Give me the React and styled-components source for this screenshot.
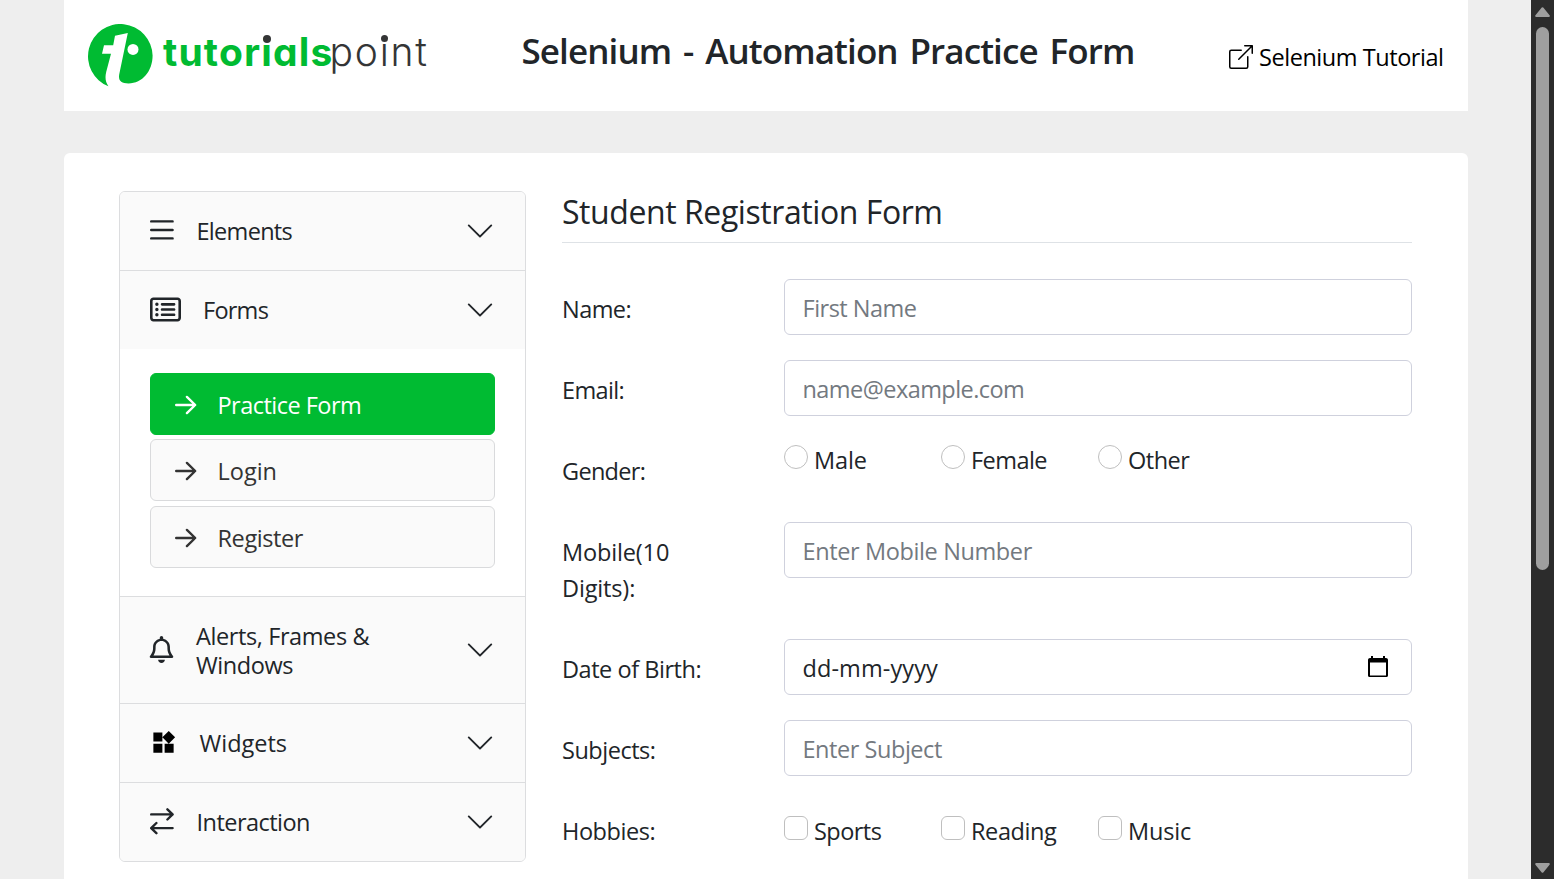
import React from "react";
import styled, { createGlobalStyle } from "styled-components";
import { FaRegBell, FaRegRectangleList } from "react-icons/fa6";
import { BsBoxArrowUpRight, BsChevronDown } from "react-icons/bs";
import { MdWidgets } from "react-icons/md";

const GlobalStyle = createGlobalStyle`
  *, *::before, *::after { box-sizing: border-box; }
  body {
    margin: 0;
    height: 879px;
    overflow: hidden;
    color: #212529;
    background: #eee;
    font-family: "Open Sans", "Noto Sans", sans-serif;
    font-size: 23.5px;
    line-height: 36px;
    letter-spacing: -0.4px;
  }
`;

const Screen = styled.div`
  display: flex;
  height: 879px;
  overflow: hidden;
`;

const Page = styled.div`
  flex: 1;
  min-width: 0;
  padding: 0 63px 0 64px;
  display: flex;
  flex-direction: column;
  gap: 42px;
`;

const Header = styled.header`
  flex: none;
  height: 111px;
  padding: 0 24px;
  display: flex;
  align-items: flex-start;
  background: #fff;
`;

const Logo = styled.a`
  width: 433px;
  padding-top: 24px;
  display: flex;
  gap: 10px;
`;

const LogoMark = styled.svg`
  flex: none;
  width: 65px;
  height: 63px;
`;

const Wordmark = styled.span`
  display: flex;
  margin-top: 4px;
  font-family: Inter, sans-serif;
  font-size: 39px;
  line-height: 48px;
  font-feature-settings: "cv11";
`;

const WordBold = styled.span`
  margin-right: -4px;
  font-weight: 700;
  letter-spacing: 1.15px;
  color: #00bb32;
`;

const WordLight = styled.span`
  font-weight: 300;
  letter-spacing: 1.8px;
  color: #343536;
`;

const DottedI = styled.span`
  position: relative;
  &::after {
    content: "";
    position: absolute;
    left: ${(p) => p.$left}px;
    top: 6.5px;
    width: ${(p) => p.$size}px;
    height: ${(p) => p.$size}px;
    border-radius: 50%;
    background: #343536;
  }
`;

const PageTitle = styled.h1`
  flex: 1;
  margin: 27px 0 0 0.5px;
  font-size: 35px;
  line-height: 48px;
  font-weight: 600;
  letter-spacing: -0.9px;
  word-spacing: 3.6px;
  white-space: nowrap;
`;

const TutorialLink = styled.a`
  width: 215px;
  margin-top: 39px;
  display: flex;
  align-items: center;
  gap: 6px;
  color: #000;
  white-space: nowrap;
  letter-spacing: -0.45px;
`;

const Card = styled.main`
  flex: 1;
  min-height: 0;
  padding: 38px 56px 0 55px;
  display: flex;
  align-items: flex-start;
  gap: 36px;
  background: #fff;
  border-radius: 6px 6px 0 0;
`;

const Accordion = styled.nav`
  flex: none;
  width: 407px;
  border: 1px solid #dcdddf;
  border-radius: 6px;
  overflow: hidden;
`;

const Section = styled.section`
  & + & { border-top: 1px solid #dcdddf; }
`;

const SectionHead = styled.div`
  height: ${(p) => (p.$tall ? 106 : 78)}px;
  padding: 0 30px;
  display: flex;
  align-items: center;
  gap: 22px;
  background: #fafafa;
  line-height: 29px;
`;

const SectionTitle = styled.span`
  flex: 1;
  padding: ${(p) => (p.$tall ? 2 : 0)}px 60px 0 0.5px;
  letter-spacing: ${(p) => p.$spacing}px;
`;

const SectionBody = styled.div`
  height: 247px;
  padding: 24px 30px 0;
  display: flex;
  flex-direction: column;
  gap: 4.4px;
`;

const NavButton = styled.a`
  height: 62px;
  padding: 2px 24px 0;
  display: flex;
  align-items: center;
  gap: 20.5px;
  border: 1px solid ${(p) => (p.$active ? "#00bb32" : "#d9dadc")};
  border-radius: 6px;
  background: ${(p) => (p.$active ? "#00bb32" : "#fafafa")};
  color: ${(p) => (p.$active ? "#fff" : "#333")};
  letter-spacing: ${(p) => p.$spacing}px;
`;

const IconBox = styled.span`
  flex: none;
  display: flex;
  align-items: center;
  justify-content: center;
  width: ${(p) => p.$width}px;
  padding-bottom: 1px;
  svg { flex: none; }
`;

const StrokeIcon = styled.svg`
  flex: none;
  fill: none;
  stroke: currentColor;
  stroke-width: 2.4;
  stroke-linecap: round;
  stroke-linejoin: round;
`;

const Form = styled.form`
  flex: 1;
  min-width: 0;
`;

const FormTitle = styled.h2`
  margin: 0 0 36px;
  height: 52px;
  border-bottom: 1px solid #dee2e6;
  font-size: 32px;
  line-height: 42px;
  font-weight: 400;
  letter-spacing: -0.43px;
`;

const Row = styled.div`
  display: grid;
  grid-template-columns: 222px 1fr;
  align-items: start;
  height: ${(p) => (p.$tall ? 92 : 56)}px;
  margin-bottom: 25px;
`;

const Label = styled.label`
  width: 150px;
  padding-top: 12px;
  letter-spacing: ${(p) => p.$spacing}px;
`;

const Field = styled.div`
  height: 56px;
  padding: 2px 21px 0 17.5px;
  display: flex;
  align-items: center;
  justify-content: space-between;
  border: 1px solid #cfd1dd;
  border-radius: 6px;
  color: ${(p) => (p.$filled ? "#212529" : "#737980")};
  letter-spacing: ${(p) => p.$spacing}px;
`;

const CalendarIcon = styled.svg`
  width: 24px;
  height: 24px;
  margin-top: -3px;
  fill: #000;
`;

const Options = styled.div`
  display: grid;
  grid-template-columns: repeat(3, 157px);
  padding-top: ${(p) => p.$top}px;
`;

const Option = styled.span`
  display: flex;
  align-items: flex-start;
  gap: 6px;
  line-height: 30px;
  letter-spacing: ${(p) => p.$spacing}px;
`;

const Control = styled.i`
  width: 24px;
  height: 24px;
  border: 1px solid #bfbfbf;
  border-radius: ${(p) => (p.$round ? "50%" : "6px")};
`;

const Scrollbar = styled.aside`
  flex: none;
  width: 23px;
  padding: 7px 0 6px;
  display: flex;
  flex-direction: column;
  align-items: center;
  background: #2c2c2c;
`;

const ScrollArrow = styled.svg`
  width: 15px;
  height: 10px;
  fill: #9f9f9f;
  stroke: #9f9f9f;
  stroke-width: 2;
  stroke-linejoin: round;
`;

const ScrollTrack = styled.div`
  flex: 1;
  width: 13px;
  padding-top: 10px;
`;

const ScrollThumb = styled.div`
  height: 543px;
  border-radius: 7px;
  background: #9f9f9f;
`;

const BarsIcon = () => (
  <StrokeIcon width="24" height="27" viewBox="0 0 24 27">
    <path d="M1.2 4.4H22.6M1.2 13H22.6M1.2 21.400H22.6" />
  </StrokeIcon>
);

const SwapIcon = () => (
  <StrokeIcon width="24" height="27" viewBox="0 0 24 27">
    <path d="M1.2 6.4H22.5M17.4 1.3L22.6 6.4L17.4 11.5M22.6 20.1H1.3M6.4 15L1.2 20.1L6.4 25.2" />
  </StrokeIcon>
);

const ArrowIcon = () => (
  <StrokeIcon width="22" height="20" viewBox="0 0 22 20">
    <path d="M1.2 10H20M11.9 1.9L20.2 10L11.9 18.1" />
  </StrokeIcon>
);

const SECTIONS = [
  { title: "Elements", icon: <BarsIcon />, iconWidth: 24, spacing: -0.7 },
  { title: "Forms", icon: <FaRegRectangleList size={31} />, iconWidth: 30.5, spacing: -0.75, open: true },
  { title: "Alerts, Frames & Windows", icon: <FaRegBell size={27} />, iconWidth: 23.5, spacing: -0.4, tall: true },
  { title: "Widgets", icon: <MdWidgets size={27} color="#000" />, iconWidth: 27, spacing: 0 },
  { title: "Interaction", icon: <SwapIcon />, iconWidth: 24, spacing: -0.53 },
];

const LINKS = [
  { text: "Practice Form", active: true, spacing: -0.52 },
  { text: "Login", spacing: 0 },
  { text: "Register", spacing: -0.4 },
];

export default function App() {
  return (
    <>
      <GlobalStyle />
      <Screen>
        <Page>
          <Header>
            <Logo>
              <LogoMark viewBox="0 0 65 63">
                <path
                  fill="#00bb32"
                  d="M64.6 31.5C64.6 47 54.5 59.4 40.5 59.4C33 59.4 30.2 56.5 31.2 50.5L39.8 9L27 11.7L25.2 21.3H16L14 29.7H23L18.2 48C16.8 54 17.6 58 20.4 62.3A32.3 32.3 0 1 1 64.6 31.5Z"
                />
                <circle cx="45" cy="25.4" r="5.5" fill="#fff" />
              </LogoMark>
              <Wordmark>
                <WordBold>
                  tutor<DottedI $left={1.8} $size={8}>i</DottedI>als
                </WordBold>
                <WordLight>
                  po<DottedI $left={1.5} $size={7}>i</DottedI>nt
                </WordLight>
              </Wordmark>
            </Logo>
            <PageTitle>Selenium - Automation Practice Form</PageTitle>
            <TutorialLink>
              <BsBoxArrowUpRight size={24} />
              Selenium Tutorial
            </TutorialLink>
          </Header>

          <Card>
            <Accordion>
              {SECTIONS.map((s) => (
                <Section key={s.title}>
                  <SectionHead $tall={s.tall}>
                    <IconBox $width={s.iconWidth}>{s.icon}</IconBox>
                    <SectionTitle $tall={s.tall} $spacing={s.spacing}>{s.title}</SectionTitle>
                    <BsChevronDown size={30} />
                  </SectionHead>
                  {s.open && (
                    <SectionBody>
                      {LINKS.map((l) => (
                        <NavButton key={l.text} $active={l.active} $spacing={l.spacing}>
                          <ArrowIcon />
                          {l.text}
                        </NavButton>
                      ))}
                    </SectionBody>
                  )}
                </Section>
              ))}
            </Accordion>

            <Form>
              <FormTitle>Student Registration Form</FormTitle>
              <Row>
                <Label $spacing={-0.55}>Name:</Label>
                <Field $spacing={-0.5}>First Name</Field>
              </Row>
              <Row>
                <Label $spacing={-0.65}>Email:</Label>
                <Field $spacing={-0.55}>name@example.com</Field>
              </Row>
              <Row>
                <Label $spacing={-0.7}>Gender:</Label>
                <Options $top={4}>
                  <Option $spacing={-0.1}><Control $round />Male</Option>
                  <Option $spacing={-0.55}><Control $round />Female</Option>
                  <Option $spacing={-0.5}><Control $round />Other</Option>
                </Options>
              </Row>
              <Row $tall>
                <Label $spacing={-0.15}>Mobile(10 Digits):</Label>
                <Field $spacing={-0.38}>Enter Mobile Number</Field>
              </Row>
              <Row>
                <Label $spacing={-0.46}>Date of Birth:</Label>
                <Field $filled $spacing={0.1}>
                  dd-mm-yyyy
                  <CalendarIcon viewBox="0 0 24 24">
                    <path d="M20 3h-1V1h-2v2H7V1H5v2H4c-1.100 0-2 .9-2 2v15.500c0 1.100.9 1.500 2 1.500h16c1.100 0 2-.4 2-1.500V5c0-1.100-.9-2-2-2zm0 17.500H4V7.500h16v13z" />
                  </CalendarIcon>
                </Field>
              </Row>
              <Row>
                <Label $spacing={-0.48}>Subjects:</Label>
                <Field $spacing={-0.45}>Enter Subject</Field>
              </Row>
              <Row>
                <Label $spacing={-0.42}>Hobbies:</Label>
                <Options $top={15}>
                  <Option $spacing={-0.55}><Control />Sports</Option>
                  <Option $spacing={-0.4}><Control />Reading</Option>
                  <Option $spacing={-0.2}><Control />Music</Option>
                </Options>
              </Row>
            </Form>
          </Card>
        </Page>

        <Scrollbar>
          <ScrollArrow viewBox="0 0 15 10"><path d="M7.5 1.200L13.800 9H1.200Z" /></ScrollArrow>
          <ScrollTrack><ScrollThumb /></ScrollTrack>
          <ScrollArrow viewBox="0 0 15 10"><path d="M7.5 8.800L13.800 1H1.200Z" /></ScrollArrow>
        </Scrollbar>
      </Screen>
    </>
  );
}
